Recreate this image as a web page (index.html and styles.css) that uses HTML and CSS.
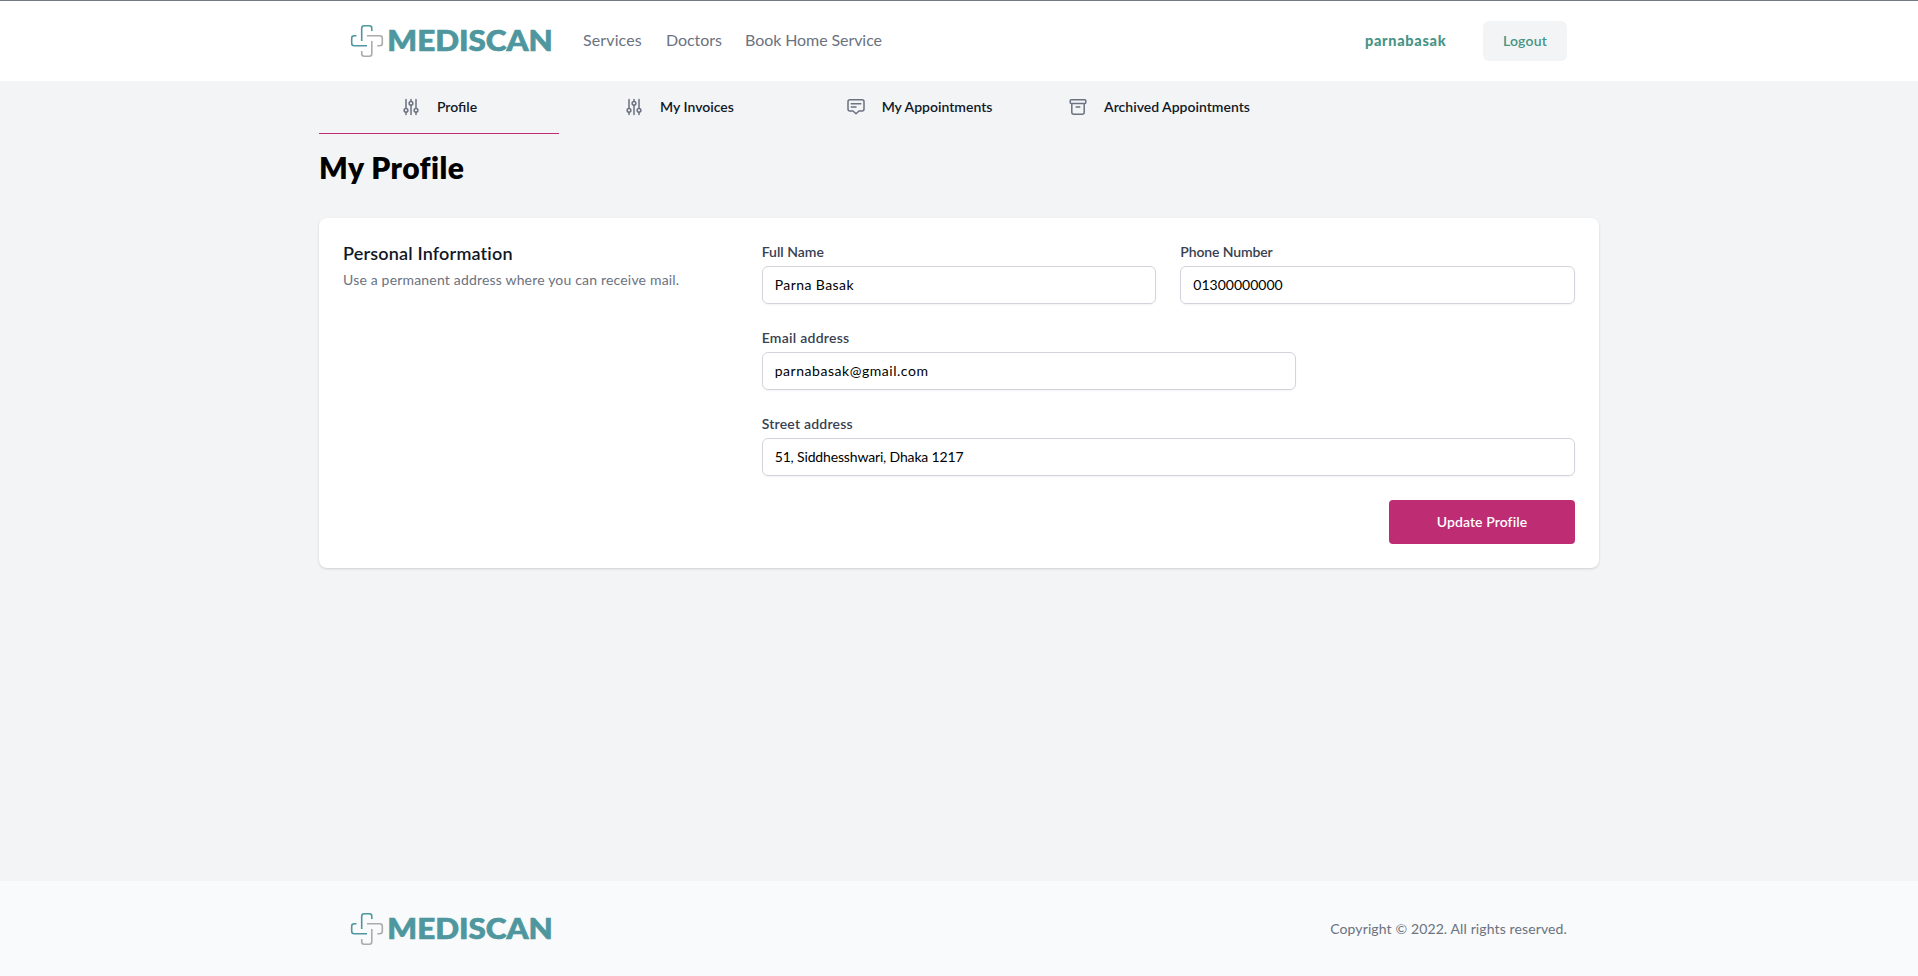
FILE: index.html
```html
<!DOCTYPE html>
<html lang="en">
<head>
<meta charset="utf-8">
<title>Mediscan - My Profile</title>
<link rel="stylesheet" href="styles.css">
</head>
<body>
<svg class="defs" width="0" height="0">
  <symbol id="cross" viewBox="0 0 34 34">
    <g fill="none" stroke-width="1.6">
      <path stroke="#4f979e" d="M11.7 17V4.2Q11.7 1.7 14.2 1.7H19.3Q21.8 1.7 21.8 4.2V7M6.5 11.7H4.2Q1.7 11.7 1.7 14.2V19.3Q1.7 21.8 4.2 21.8H17"/>
      <path stroke="#a9abad" d="M17 11.7H29.8Q32.3 11.7 32.3 14.2V19.3Q32.3 21.8 29.8 21.8H27.3M21.8 17V29.8Q21.8 32.3 19.3 32.3H14.2Q11.7 32.3 11.7 29.8V27"/>
    </g>
  </symbol>
  <symbol id="sliders" viewBox="0 0 20 20">
    <path d="M5 2.5V11M5 15.4V17.5M10 2.5V4M10 8.4V17.5M15 2.5V11M15 15.4V17.5"/>
    <circle cx="5" cy="13.3" r="1.9"/><circle cx="10" cy="6.3" r="1.9"/><circle cx="15" cy="13.3" r="1.9"/>
  </symbol>
  <symbol id="message" viewBox="0 0 20 20">
    <path d="M4 2.8H16Q18 2.8 18 4.8V12Q18 14 16 14H13L10 16.8L7 14H4Q2 14 2 12V4.8Q2 2.8 4 2.8ZM5.2 6.8H14.8M5.2 10H10"/>
  </symbol>
  <symbol id="archive" viewBox="0 0 20 20">
    <path d="M3.2 2.8H16.8Q17.8 2.8 17.8 3.8V5.5Q17.8 6.5 16.8 6.5H3.2Q2.2 6.5 2.2 5.5V3.8Q2.2 2.8 3.2 2.8ZM3.8 6.5V15.2Q3.8 17.2 5.8 17.2H14.2Q16.2 17.2 16.2 15.2V6.5M8.2 10H11.8"/>
  </symbol>
</svg>

<header class="header">
  <div class="header-inner">
    <svg class="logo" viewBox="0 0 202 34"><use href="#cross" width="34" height="34"/><text class="wordmark" x="37.3" y="27.4" textLength="165.5" lengthAdjust="spacingAndGlyphs">MEDISCAN</text></svg>
    <nav class="main-nav">
      <a class="nav-services">Services</a>
      <a class="nav-doctors">Doctors</a>
      <a class="nav-home">Book Home Service</a>
    </nav>
    <span class="username">parnabasak</span>
    <button class="logout">Logout</button>
  </div>
</header>

<main class="main">
  <nav class="tabs">
    <a class="tab active"><svg><use href="#sliders"/></svg><span>Profile</span></a>
    <a class="tab"><svg><use href="#sliders"/></svg><span>My Invoices</span></a>
    <a class="tab"><svg><use href="#message"/></svg><span>My Appointments</span></a>
    <a class="tab"><svg><use href="#archive"/></svg><span>Archived Appointments</span></a>
  </nav>
  <h1 class="title">My Profile</h1>

  <section class="card">
    <div class="intro">
      <h2>Personal Information</h2>
      <p>Use a permanent address where you can receive mail.</p>
    </div>
    <form class="form">
      <div class="field half"><label>Full Name</label><div class="input v-name">Parna Basak</div></div>
      <div class="field half"><label class="l-phone">Phone Number</label><div class="input">01300000000</div></div>
      <div class="field wide"><label class="l-email">Email address</label><div class="input v-email">parnabasak@gmail.com</div></div>
      <div class="field full"><label class="l-street">Street address</label><div class="input v-street">51, Siddhesshwari, Dhaka 1217</div></div>
      <button class="update" type="button">Update Profile</button>
    </form>
  </section>
</main>

<footer class="footer">
  <div class="footer-inner">
    <svg class="logo" viewBox="0 0 202 34"><use href="#cross" width="34" height="34"/><text class="wordmark" x="37.3" y="27.4" textLength="165.5" lengthAdjust="spacingAndGlyphs">MEDISCAN</text></svg>
    <p class="copyright">Copyright © 2022. All rights reserved.</p>
  </div>
</footer>
</body>
</html>
```
FILE: styles.css
```css
* { box-sizing: border-box; margin: 0; }
body {
  min-height: 976px;
  display: flex;
  flex-direction: column;
  background: #f3f4f6;
  color: #000;
  font: 14px/20px Lato, "Open Sans", sans-serif;
  white-space: nowrap;
}
.defs { position: absolute; }
button { border: 0; font: inherit; }

.header { height: 81px; background: #fff; border-top: 1px solid #717a85; }
.header-inner, .footer-inner {
  width: 1280px;
  height: 100%;
  margin: 0 auto;
  padding: 0 32px 0 31px;
  display: flex;
  align-items: center;
}
.logo { width: 202px; height: 34px; flex: none; overflow: visible; }
.wordmark { font: 900 29px Lato, sans-serif; fill: #4f979e; stroke: #4f979e; stroke-width: .7; }
.main-nav { display: flex; flex: 1; gap: 24px; margin-left: 31px; padding-bottom: 2px; font-size: 16px; line-height: 24px; color: #6b7280; }
.main-nav a { flex: none; }
.nav-services { width: 59px; letter-spacing: .12px; }
.nav-doctors { width: 55px; letter-spacing: -.05px; }
.nav-home { letter-spacing: -.08px; }
.username { width: 82px; margin-right: 36px; font-size: 14.5px; font-weight: 900; letter-spacing: .7px; color: #479485; }
.logout { width: 84px; height: 40px; border-radius: 6px; background: #f3f4f6; color: #479485; font-weight: 600; letter-spacing: .2px; }

.main { width: 1280px; margin: 0 auto; flex: 1; }
.tabs { display: flex; height: 53px; }
.tab { width: 240px; display: flex; align-items: center; justify-content: center; gap: 16px; border-bottom: 1px solid transparent; color: #111827; font-weight: 600; }
.tab.active { border-color: #be2d74; }
.tab svg { width: 20px; height: 20px; fill: none; stroke: #6b7280; stroke-width: 1.5; stroke-linejoin: round; stroke-linecap: round; }
.title { height: 84px; padding-top: 15px; font-size: 30px; line-height: 36px; font-weight: 800; letter-spacing: .45px; }

.card {
  height: 350px;
  padding: 24px;
  display: grid;
  grid-template-columns: 394.67px 1fr;
  gap: 24px;
  background: #fff;
  border-radius: 8px;
  box-shadow: 0 1px 3px rgba(0,0,0,.1), 0 1px 2px rgba(0,0,0,.06);
}
.intro h2 { font-size: 18px; line-height: 22px; font-weight: 600; letter-spacing: .18px; color: #111827; }
.intro p { margin-top: 6px; letter-spacing: .18px; color: #6b7280; }
.form { display: grid; grid-template-columns: repeat(6, 1fr); gap: 24px; align-content: start; }
.half { grid-column: span 3; }
.wide { grid-column: span 4; }
.full { grid-column: span 6; }
.field label { display: block; color: #374151; font-weight: 600; }
.field .l-phone { letter-spacing: -.13px; }
.field .l-email { letter-spacing: .27px; }
.field .l-street { letter-spacing: .22px; }
.input { height: 38px; margin-top: 4px; padding: 8px 12px; border: 1px solid #d1d5db; border-radius: 6px; box-shadow: 0 1px 2px rgba(0,0,0,.05); }
.v-name { letter-spacing: .43px; }
.v-email { letter-spacing: .54px; }
.v-street { letter-spacing: -.15px; }
.update { grid-column: span 6; justify-self: end; width: 186px; height: 44px; border-radius: 4px; background: #be2d74; color: #fff; font-weight: 600; letter-spacing: .08px; }

.footer { height: 95px; background: #f9fafb; }
.footer-inner { justify-content: space-between; }
.copyright { letter-spacing: .12px; color: #6b7280; }
```
